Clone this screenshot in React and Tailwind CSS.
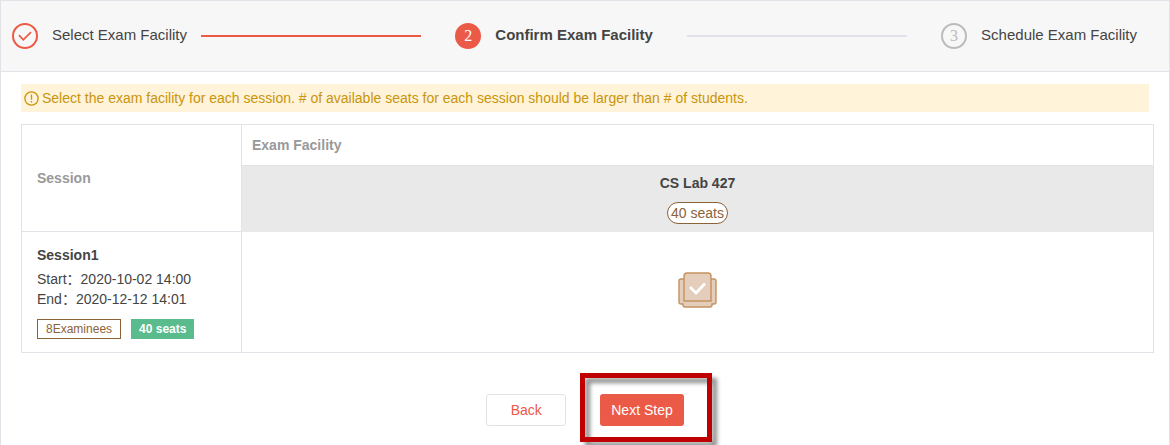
import React from 'react';
import clsx from 'clsx';

const steps = [
  { number: 1, label: 'Select Exam Facility', status: 'done' },
  { number: 2, label: 'Confirm Exam Facility', status: 'current' },
  { number: 3, label: 'Schedule Exam Facility', status: 'upcoming' },
];

const facilities = [{ id: 'cs427', name: 'CS Lab 427', seats: 40 }];

const sessions = [
  {
    id: 1,
    name: 'Session1',
    start: '2020-10-02 14:00',
    end: '2020-12-12 14:01',
    examinees: 8,
    seats: 40,
  },
];

function StepBadge({ number, status }) {
  if (status === 'done') {
    return (
      <svg className="size-[26px] shrink-0" viewBox="0 0 26 26" fill="none" stroke="#eb5a46" strokeWidth="2">
        <circle cx="13" cy="13" r="12" />
        <path d="M7 12.2 L11.3 16.8 L19 9.2" strokeWidth="1.7" />
      </svg>
    );
  }
  return (
    <span
      className={clsx(
        'flex size-[26px] shrink-0 items-center justify-center rounded-full font-["Liberation_Serif",serif] text-base',
        status === 'current' ? 'bg-[#eb5a46] text-white' : 'border-2 border-[#bbb] text-[#bbb]'
      )}
    >
      {number}
    </span>
  );
}

function Stepper() {
  return (
    <ol className="flex items-center border-b border-[#e3e2e8] bg-[#f7f7f7] py-[22px] pr-8 pl-[11px]">
      {steps.map((step, index) => (
        <React.Fragment key={step.number}>
          {index > 0 && (
            <li
              aria-hidden="true"
              className={clsx(
                'h-0.5 flex-1',
                index === 1 ? 'mr-[34px] ml-[14px] bg-[#eb5a46]' : 'mx-[34px] bg-[#e3e2e8]'
              )}
            />
          )}
          <li className="flex items-center gap-[14px]">
            <StepBadge number={step.number} status={step.status} />
            <span className={clsx('pb-0.5 text-[15px] leading-5', step.status === 'current' && 'font-bold')}>
              {step.label}
            </span>
          </li>
        </React.Fragment>
      ))}
    </ol>
  );
}

function SeatIcon() {
  return (
    <svg className="h-9 w-[39px]" viewBox="0 0 39 36" fill="#e4cdba" stroke="#c3935f" strokeWidth="1.4">
      <path d="M3 7h33q2 0 2 2v21q0 2-2 2h-2v1q0 2-2 2H7q-2 0-2-2v-1H3q-2 0-2-2V9q0-2 2-2z" />
      <path d="M9 1h21q3 0 3 3v25H6V4q0-3 3-3z" />
      <path d="M12 15l6 6 9-9.500" fill="none" stroke="#fff" strokeWidth="2.800" />
    </svg>
  );
}

function SessionTable() {
  return (
    <table className="w-full table-fixed border-collapse border border-[#e3e2e8] text-sm">
      <colgroup>
        <col className="w-[220px]" />
        <col />
      </colgroup>
      <thead>
        <tr className="h-[41px] text-left text-[#999]">
          <th rowSpan={2} scope="col" className="border border-[#e3e2e8] pl-[15px] font-bold">
            Session
          </th>
          <th colSpan={facilities.length} scope="colgroup" className="border border-[#e3e2e8] pl-[10px] font-bold">
            Exam Facility
          </th>
        </tr>
        <tr className="h-[66px]">
          {facilities.map((facility) => (
            <th key={facility.id} scope="col" className="border-r border-[#e3e2e8] bg-[#e9e9e9] font-normal">
              <div className="flex flex-col items-center gap-[9px]">
                <span className="font-bold">{facility.name}</span>
                <span className="rounded-full border border-[#8c6239] bg-white px-[3px] text-[#8c6239]">
                  {facility.seats} seats
                </span>
              </div>
            </th>
          ))}
        </tr>
      </thead>
      <tbody>
        {sessions.map((session) => (
          <tr key={session.id} className="h-[121px]">
            <td className="border border-[#e3e2e8] pl-[15px]">
              <p className="mb-1 font-bold">{session.name}</p>
              <p className="leading-5">Start：{session.start}</p>
              <p className="leading-5">End：{session.end}</p>
              <div className="mt-[10px] flex gap-[10px] text-xs leading-[18px]">
                <span className="border border-[#8c6239] px-2 text-[#8c6239]">{session.examinees}Examinees</span>
                <span className="border border-[#5abb8c] bg-[#5abb8c] px-[7px] font-bold text-white">
                  {session.seats} seats
                </span>
              </div>
            </td>
            {facilities.map((facility) => (
              <td key={facility.id} className="border-r border-b border-[#e3e2e8] pb-1 text-center">
                <button type="button" aria-label={facility.name} className="block w-full">
                  <span className="flex justify-center">
                    <SeatIcon />
                  </span>
                </button>
              </td>
            ))}
          </tr>
        ))}
      </tbody>
    </table>
  );
}

export default function App() {
  return (
    <div className="min-h-screen overflow-hidden border border-b-0 border-[#e3e2e8] bg-white font-['Liberation_Sans','Noto_Sans_CJK_SC',sans-serif] text-sm text-[#444]">
      <Stepper />
      <main className="pt-3 pr-[15px] pl-5">
        <p className="mr-[5px] mb-3 flex h-7 items-center gap-[3px] bg-[#fff3d9] pl-[3px] text-[#c9950c]">
          <svg className="size-[15px]" viewBox="0 0 15 15" fill="none" stroke="currentColor" strokeWidth="1.300">
            <circle cx="7.500" cy="7.500" r="6.600" />
            <path d="M7.500 3.500v5.200M7.500 10v1.500" />
          </svg>
          Select the exam facility for each session. # of available seats for each session should be larger than # of
          students.
        </p>

        <SessionTable />

        <div className="mt-[41px] mr-[5px] flex justify-center gap-[34px]">
          <button type="button" className="h-8 w-20 rounded-[3px] border border-[#e3e2e8] text-[#eb5a46]">
            Back
          </button>
          <div className="relative">
            <button type="button" className="h-8 rounded-[3px] bg-[#eb5a46] px-[11px] text-white">
              Next Step
            </button>
            {/* Highlight frame */}
            <div className="pointer-events-none absolute -top-[21px] -right-7 -bottom-4 -left-5 border-5 border-[#c00000] drop-shadow-[5px_5px_2px_rgba(0,0,0,0.45)]" />
          </div>
        </div>
      </main>
    </div>
  );
}
